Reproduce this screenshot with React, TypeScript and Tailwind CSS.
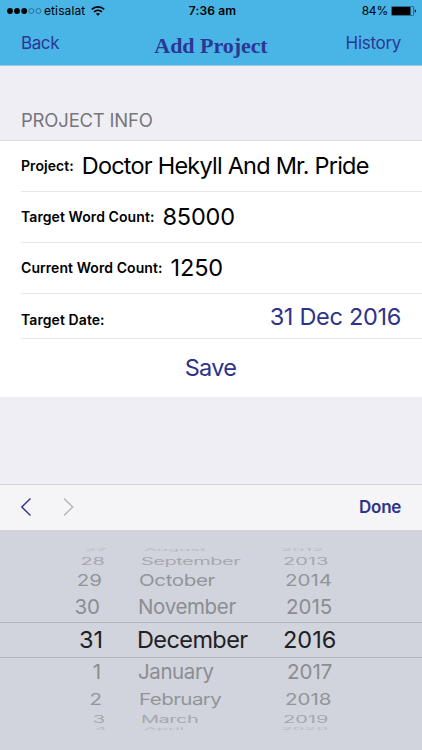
import React from 'react'
import clsx from 'clsx'

interface FieldRowProps {
  label: string
  value: string
  labelClass?: string
  valueClass?: string
}

const FieldRow: React.FC<FieldRowProps> = ({ label, value, labelClass, valueClass }) => (
  <div className="ml-[21px] flex h-[51px] items-center border-b border-[#e8e8ea]">
    <span className={clsx('pb-px text-[14px] font-semibold', labelClass)}>{label}</span>
    <span className={clsx('ml-2 text-[23.5px]', valueClass)}>{value}</span>
  </div>
)

interface PickerRow {
  day: string
  month: string
  year: string
  // row height and column offsets
  row: string
  // flattening of the glyphs, as the wheel turns away
  text: string
  monthClass: string
}

const PICKER_ROWS: PickerRow[] = [
  { day: '27', month: 'August', year: '2012', row: 'h-[7px] grid-cols-[107px_37px_137px_1fr]', text: 'text-[19px] scale-y-[0.18] text-[#b9bbc2]', monthClass: 'tracking-[-0.3px]' },
  { day: '28', month: 'September', year: '2013', row: 'h-[15px] grid-cols-[105px_36px_142px_1fr]', text: 'text-[20px] scale-y-[0.5] text-[#a6a8ae]', monthClass: 'tracking-[-0.5px]' },
  { day: '29', month: 'October', year: '2014', row: 'h-[25px] grid-cols-[102px_37px_146px_1fr]', text: 'text-[20.5px] scale-y-[0.8] text-[#929499]', monthClass: 'tracking-[-0.35px]' },
  { day: '30', month: 'November', year: '2015', row: 'h-[29px] grid-cols-[100px_38px_148px_1fr]', text: 'text-[20.5px] text-[#8b8d92]', monthClass: 'tracking-[-0.35px]' },
  { day: '31', month: 'December', year: '2016', row: 'h-[36px] grid-cols-[103px_34px_146px_1fr] border-y border-[#b3b5bb]', text: 'text-[23.5px] text-[#202124]', monthClass: 'tracking-[-0.6px]' },
  { day: '1', month: 'January', year: '2017', row: 'h-[29px] grid-cols-[101px_37px_149px_1fr]', text: 'text-[20.5px] text-[#8b8d92]', monthClass: 'tracking-[-0.4px]' },
  { day: '2', month: 'February', year: '2018', row: 'h-[25px] grid-cols-[102px_37px_146px_1fr]', text: 'text-[20.5px] scale-y-[0.8] text-[#929499]', monthClass: 'tracking-[-0.55px]' },
  { day: '3', month: 'March', year: '2019', row: 'h-[13px] grid-cols-[105px_36px_142px_1fr]', text: 'text-[20px] scale-y-[0.5] text-[#a6a8ae]', monthClass: 'tracking-[-0.5px]' },
  { day: '4', month: 'April', year: '2020', row: 'h-[7px] grid-cols-[107px_37px_137px_1fr]', text: 'text-[19px] scale-y-[0.18] text-[#b9bbc2]', monthClass: 'tracking-[-0.3px]' },
]

const StatusBar = () => (
  <div className="grid h-[22px] grid-cols-3 items-center text-[12px] text-black">
    <div className="flex items-center pl-[7px]">
      <svg width="35" height="8" viewBox="0 0 35 8">
        <circle cx="3" cy="4" r="2.9" />
        <circle cx="10" cy="4" r="2.9" />
        <circle cx="17.2" cy="4" r="2.9" />
        <circle cx="24.3" cy="4" r="2.5" fill="none" stroke="#1d4a62" strokeWidth="0.6" />
        <circle cx="31.4" cy="4" r="2.5" fill="none" stroke="#1d4a62" strokeWidth="0.6" />
      </svg>
      <span className="ml-[2px] tracking-[0.1px]">etisalat</span>
      <svg className="ml-[6px] mb-px" width="14" height="10" viewBox="0 0 14 10" fill="none" stroke="#000" strokeWidth="1.7">
        <path d="M0.8 3.4C4.3 0.1 9.7 0.1 13.2 3.4" />
        <path d="M3 5.9C5.3 3.8 8.7 3.8 11 5.9" />
        <path d="M4.9 7.7C6.1 6.6 7.9 6.6 9.1 7.7L7 9.8Z" fill="#000" stroke="none" />
      </svg>
    </div>
    <span className="pl-[3px] text-center font-semibold tracking-[0.15px]">7:36 am</span>
    <div className="flex items-center justify-end pr-[5px]">
      <span className="tracking-[-0.2px]">84%</span>
      <svg className="ml-[3px]" width="26" height="10" viewBox="0 0 26 10">
        <rect x="0.4" y="0.4" width="22.2" height="9.2" rx="1" fill="none" stroke="#16475f" strokeWidth="0.7" />
        <rect x="1" y="1" width="18.5" height="8" />
        <path d="M23.8 3.3C25.4 3.8 25.4 6.2 23.8 6.7Z" />
      </svg>
    </div>
  </div>
)

export default function App() {
  return (
    <div className="flex h-[750px] w-[422px] flex-col overflow-hidden bg-[#efeef4] font-['Inter',sans-serif] text-black">
      <header className="h-[66px] border-b border-[#9fc6dc] bg-[#49b4e6] text-[#2c3792]">
        <StatusBar />
        <div className="grid h-[43px] grid-cols-[1fr_auto_1fr] items-center px-[21px]">
          <button className="justify-self-start text-[17px] tracking-[-0.4px]">Back</button>
          <h1 className="mt-[4px] font-['Liberation_Serif',serif] text-[22px] font-bold tracking-[-0.05px]">Add Project</h1>
          <button className="justify-self-end text-[17px] tracking-[-0.3px]">History</button>
        </div>
      </header>

      <h2 className="flex h-[75px] items-end border-b border-[#dcdbe0] pb-[5px] pl-[21px] text-[18.5px] tracking-[-0.2px] text-[#76767b]">
        PROJECT INFO
      </h2>

      {/* Form */}
      <section className="h-[256px] bg-white">
        <FieldRow label="Project:" value="Doctor Hekyll And Mr. Pride" labelClass="tracking-[0.05px]" valueClass="tracking-[-0.78px]" />
        <FieldRow label="Target Word Count:" value="85000" labelClass="tracking-[0.08px]" valueClass="tracking-[-0.2px]" />
        <FieldRow label="Current Word Count:" value="1250" labelClass="tracking-[0.07px]" valueClass="tracking-[-0.1px]" />
        <div className="ml-[21px] flex h-[45px] items-center justify-between border-b border-[#e8e8ea] pr-[21px]">
          <span className="mt-[7px] text-[14px] font-semibold tracking-[0.08px]">Target Date:</span>
          <span className="mt-[2px] text-[23.5px] tracking-[-0.3px] text-[#2e3389]">31 Dec 2016</span>
        </div>
        <button className="flex h-[58px] w-full items-center justify-center pr-px text-[23.5px] tracking-[-0.7px] text-[#2e3389]">Save</button>
      </section>

      {/* Keyboard toolbar */}
      <div className="mt-[87px] flex h-[46px] items-center border-t border-[#d2d2d8] bg-[#f5f5f8] px-[21px]">
        <svg className="mb-px" width="54" height="18" viewBox="0 0 54 18" fill="none" strokeWidth="1.4">
          <path d="M9.5 0.5L0.8 9L9.5 17.5" stroke="#2e3389" />
          <path d="M43 0.5L51.7 9L43 17.5" stroke="#b4b4b8" />
        </svg>
        <button className="ml-auto text-[17px] font-semibold tracking-[-0.3px] text-[#2e3389]">Done</button>
      </div>

      {/* Date wheel */}
      <div className="h-[220px] bg-[#d1d4dc] pt-[16px]">
        {PICKER_ROWS.map((r) => (
          <div key={r.month} className={clsx('grid grid-rows-1 items-center', r.row)}>
            <span className={clsx('text-right leading-none', r.text)}>{r.day}</span>
            <span />
            <span className={clsx('leading-none', r.text, r.monthClass)}>{r.month}</span>
            <span className={clsx('leading-none', r.text)}>{r.year}</span>
          </div>
        ))}
      </div>
    </div>
  )
}
